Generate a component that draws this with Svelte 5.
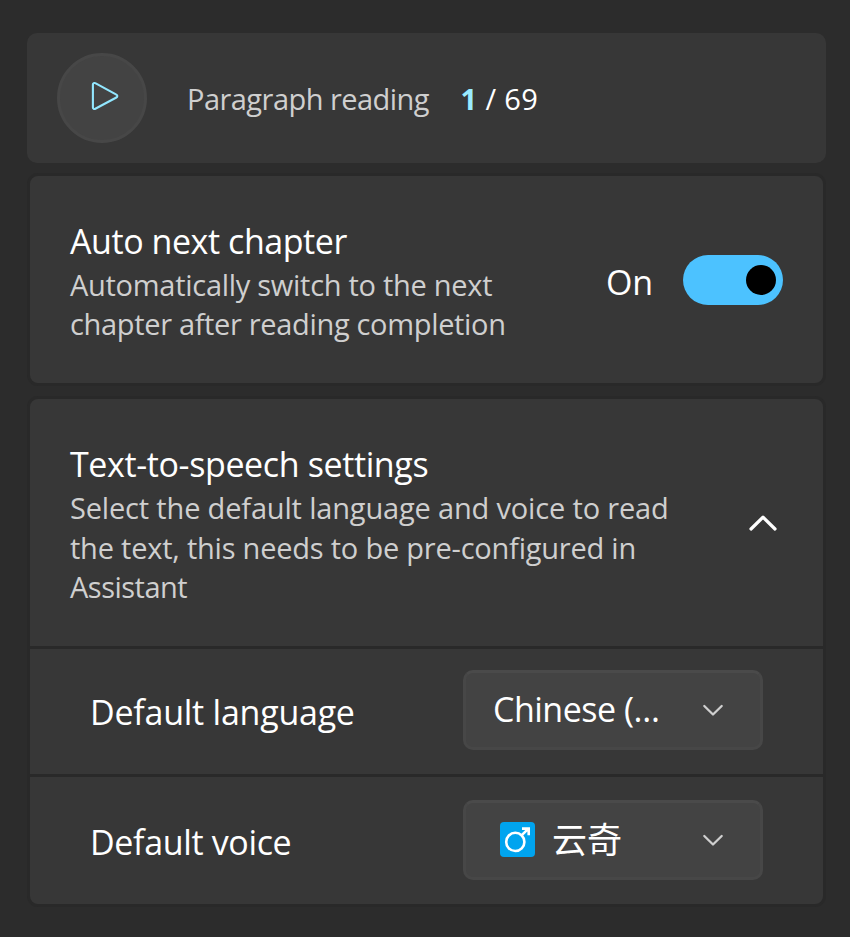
<script>
  let playing = $state(false);
  let autoNext = $state(true);
  let expanded = $state(true);

  // Each line carries its own tracking, in pixels.
  const autoLines = [
    { text: 'Automatically switch to the next', tracking: -0.28 },
    { text: 'chapter after reading completion', tracking: -0.33 }
  ];
  const speechLines = [
    { text: 'Select the default language and voice to read', tracking: -0.17 },
    { text: 'the text, this needs to be pre-configured in', tracking: -0.22 },
    { text: 'Assistant', tracking: -0.5 }
  ];
</script>

{#snippet chevronDown()}
  <svg class="chevron-down" width="22" height="14" viewBox="0 0 22 14" aria-hidden="true">
    <path d="M2.3 3 L11 11.5 L19.7 3" />
  </svg>
{/snippet}

{#snippet description(lines)}
  <p class="desc">
    {#each lines as line}
      <span style="letter-spacing: {line.tracking}px">{line.text}</span>
    {/each}
  </p>
{/snippet}

<main>
  <section class="player">
    <button class="play" aria-label="Play" onclick={() => (playing = !playing)}>
      <svg width="36" height="36" viewBox="0 0 36 36" aria-hidden="true">
        <path d="M8.9 4.6 V27.4 A1.6 1.6 0 0 0 11.3 28.8 L32.4 17.5 A1.6 1.6 0 0 0 32.4 14.6 L11.3 3.2 A1.6 1.6 0 0 0 8.9 4.6 Z" />
      </svg>
    </button>
    <span class="caption">Paragraph reading</span>
    <span class="current">1</span>
    <span class="total">/ 69</span>
  </section>

  <section class="card auto">
    <div class="copy">
      <h2 class="auto-title">Auto next chapter</h2>
      {@render description(autoLines)}
    </div>
    <span class="state">{autoNext ? 'On' : 'Off'}</span>
    <button class="toggle" class:off={!autoNext} role="switch" aria-checked={autoNext} aria-label="Auto next chapter" onclick={() => (autoNext = !autoNext)}>
      <span class="knob"></span>
    </button>
  </section>

  <section class="card speech">
    <header>
      <div class="copy">
        <h2>Text-to-speech settings</h2>
        {@render description(speechLines)}
      </div>
      <button class="expand" aria-label="Toggle settings" onclick={() => (expanded = !expanded)}>
        <svg width="32" height="20" viewBox="0 0 32 20" aria-hidden="true">
          <path d="M4 16 L16 4.2 L28 16" />
        </svg>
      </button>
    </header>
    {#if expanded}
      <div class="row language">
        <span class="label">Default language</span>
        <button class="select">
          <span class="value">Chinese (…</span>
          {@render chevronDown()}
        </button>
      </div>
      <div class="row voice">
        <span class="label">Default voice</span>
        <button class="select">
          <svg class="male" width="35" height="35" viewBox="0 0 35 35" aria-hidden="true">
            <rect width="35" height="35" rx="4" fill="#00a4ef" />
            <circle cx="15.3" cy="19.9" r="9.1" />
            <path d="M21.8 13.2 L28.2 6.8 M22 6.6 H28.7 V13.2" />
          </svg>
          <span class="value name">云奇</span>
          {@render chevronDown()}
        </button>
      </div>
    {/if}
  </section>
</main>

<style>
  :global(body) {
    margin: 0;
    background: #2c2c2c;
  }
  main {
    box-sizing: border-box;
    width: 850px;
    height: 937px;
    padding: 33px 24px 0 27px;
    background: #2c2c2c;
    color: #fff;
    font-family: 'Open Sans', 'Noto Sans', 'Noto Sans CJK SC', sans-serif;
    font-size: 34px;
    white-space: nowrap;
    overflow: hidden;
  }
  section {
    box-sizing: border-box;
    width: 799px;
  }
  button {
    box-sizing: border-box;
    padding: 0;
    border: 0;
    background: none;
    color: inherit;
    font: inherit;
    flex: none;
  }
  svg {
    display: block;
    fill: none;
    stroke-linecap: round;
    stroke-linejoin: round;
    flex: none;
  }
  .player {
    display: flex;
    align-items: center;
    height: 130px;
    margin-bottom: 10px;
    padding-left: 30px;
    border-radius: 10px;
    background: #373737;
    font-size: 29px;
    line-height: 40px;
  }
  .play {
    display: grid;
    place-items: center;
    width: 90px;
    height: 90px;
    border: 3px solid #474747;
    border-radius: 50%;
    background: #434343;
  }
  .play svg {
    stroke: #92e7ff;
    stroke-width: 2.1;
  }
  .caption {
    width: 273.5px;
    margin-left: 40px;
    color: #cfcfcf;
    letter-spacing: -0.54px;
  }
  .current {
    width: 25px;
    color: #99ebff;
    font-weight: 700;
  }
  .total {
    letter-spacing: 0.3px;
  }
  .caption,
  .current,
  .total {
    padding-top: 2px;
  }
  .card {
    border: 3px solid #292929;
    border-radius: 11px;
    background: #373737;
  }
  .auto {
    display: flex;
    height: 213px;
    margin-bottom: 10px;
    padding-left: 40px;
  }
  .copy {
    flex: 1;
    padding-top: 42px;
  }
  h2 {
    margin: 0;
    font-size: 34px;
    font-weight: 400;
    line-height: 47px;
    letter-spacing: -0.38px;
  }
  .auto-title {
    letter-spacing: -0.44px;
  }
  .desc {
    display: flex;
    flex-direction: column;
    margin: 0;
    color: #cfcfcf;
    font-size: 29px;
    line-height: 39.6px;
  }
  .auto .desc {
    line-height: 39px;
  }
  .state {
    width: 77px;
    margin-top: 82px;
    line-height: 48px;
    letter-spacing: -0.3px;
  }
  .toggle {
    display: flex;
    align-items: center;
    justify-content: flex-end;
    width: 100px;
    height: 50px;
    margin: 79px 40px 0 0;
    padding: 0 7px;
    border-radius: 25px;
    background: #4cc2ff;
  }
  .toggle.off {
    justify-content: flex-start;
    background: #5a5a5a;
  }
  .knob {
    width: 30px;
    height: 30px;
    border-radius: 50%;
    background: #000;
  }
  header {
    display: flex;
    align-items: center;
    height: 247px;
    padding: 0 44px 0 40px;
  }
  header .copy {
    align-self: flex-start;
  }
  .expand svg {
    stroke: #fff;
    stroke-width: 3.2;
  }
  .row {
    box-sizing: border-box;
    display: flex;
    justify-content: space-between;
    border-top: 3px solid #292929;
    padding: 0 60px;
  }
  .language {
    height: 128px;
    padding-top: 21px;
  }
  .voice {
    height: 130px;
    padding-top: 23px;
  }
  .label {
    margin-top: 2px;
    line-height: 80px;
    letter-spacing: -0.24px;
  }
  .voice .label {
    letter-spacing: -0.35px;
  }
  .select {
    display: flex;
    align-items: center;
    width: 300px;
    height: 80px;
    padding: 0 36px 0 27px;
    border: 3px solid #474747;
    border-top-color: #4a4a4a;
    border-radius: 10px;
    background: #434343;
    text-align: left;
  }
  .value {
    flex: 1;
    padding-bottom: 2px;
    line-height: 48px;
    letter-spacing: -0.5px;
  }
  .name {
    padding-bottom: 5px;
    font-family: 'Noto Sans CJK SC', sans-serif;
    font-size: 35px;
    letter-spacing: 0;
  }
  .male {
    margin: 0 17px 1px 7px;
    stroke: #fff;
    stroke-width: 2.6;
    stroke-linecap: butt;
    stroke-linejoin: miter;
  }
  .male rect {
    stroke: none;
  }
  .chevron-down {
    stroke: #cfcfcf;
    stroke-width: 2.3;
  }
</style>
